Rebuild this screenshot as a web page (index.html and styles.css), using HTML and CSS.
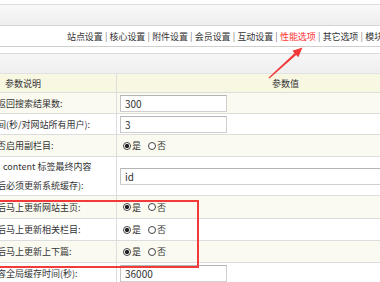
FILE: index.html
```html
<!DOCTYPE html>
<html lang="zh-CN">
<head>
<meta charset="utf-8">
<link rel="stylesheet" href="styles.css">
</head>
<body>
<div class="page">
  <div class="bar1"></div>
  <div class="nav">
    <span class="item">站点设置</span><span class="sep">|</span>
    <span class="item">核心设置</span><span class="sep">|</span>
    <span class="item">附件设置</span><span class="sep">|</span>
    <span class="item">会员设置</span><span class="sep">|</span>
    <span class="item">互动设置</span><span class="sep">|</span>
    <span class="item active">性能选项</span><span class="sep">|</span>
    <span class="item">其它选项</span><span class="sep">|</span>
    <span class="item">模块设置</span>
  </div>
  <div class="gap"></div>
  <div class="bar2"></div>
  <div class="cfg">
    <div class="row head"><div class="lab"><span class="title">参数说明</span></div><div class="val center">参数值</div></div>
    <div class="row alt"><div class="lab"><span class="cut">返回搜索结果数:</span></div><div class="val"><span class="inp">300</span></div></div>
    <div class="row"><div class="lab"><span class="cut">间(秒/对网站所有用户):</span></div><div class="val"><span class="inp">3</span></div></div>
    <div class="row alt r3"><div class="lab"><span class="cut">否启用副栏目:</span></div><div class="val"><span class="radio on"></span><span class="opt">是</span><span class="radio"></span><span class="opt">否</span></div></div>
    <div class="row tall"><div class="lab two"><span class="line first">content 标签最终内容</span><span class="line cut">后必须更新系统缓存):</span></div><div class="val"><span class="inp wide">id</span></div></div>
    <div class="row alt r5"><div class="lab"><span class="cut">后马上更新网站主页:</span></div><div class="val"><span class="radio on"></span><span class="opt">是</span><span class="radio"></span><span class="opt">否</span></div></div>
    <div class="row r6"><div class="lab"><span class="cut">后马上更新相关栏目:</span></div><div class="val"><span class="radio on"></span><span class="opt">是</span><span class="radio"></span><span class="opt">否</span></div></div>
    <div class="row alt r7"><div class="lab"><span class="cut">后马上更新上下篇:</span></div><div class="val"><span class="radio on"></span><span class="opt">是</span><span class="radio"></span><span class="opt">否</span></div></div>
    <div class="row"><div class="lab"><span class="cut">容全局缓存时间(秒):</span></div><div class="val"><span class="inp">36000</span></div></div>
  </div>
  <div class="redbox"></div>
  <svg class="arrow" width="50" height="40" viewBox="0 0 50 40">
    <polygon points="9.4,36.4 36.2,13.1 38.3,15.3 42.5,5.6 32.4,8.8 34.5,11.2 8.6,35.6" fill="#f23a3a"/>
  </svg>
</div>
</body>
</html>
```

FILE: styles.css
```css
html, body {
  margin: 0;
  padding: 0;
  overflow: hidden;
  background: #fff;
}
.page {
  position: relative;
  width: 460px;
  font-family: "Noto Sans CJK SC", "Noto Sans", sans-serif;
  font-size: 9px;
  color: #333;
}
.bar1 {
  margin-top: 4px;
  height: 20px;
  border-top: 1px solid #dcdcdc;
  border-bottom: 1px solid #d6d6d6;
  background: linear-gradient(#f9f9f9, #eeeeee);
}
.nav {
  height: 20px;
  display: flex;
  align-items: center;
  padding-left: 67px;
  white-space: nowrap;
  border-bottom: 1px solid #cfcfcf;
  color: #333;
}
.nav .item {
  letter-spacing: -0.1px;
}
.nav .sep {
  width: 7px;
  text-align: center;
  color: #777;
}
.nav .active {
  color: #f33;
}
.gap {
  height: 6px;
  border-bottom: 1px solid #dcdcdc;
}
.bar2 {
  height: 19px;
  background: linear-gradient(#f6f6f6, #efefef);
}
.cfg {
  border-top: 1px solid #e2e2e2;
}
.row {
  display: grid;
  grid-template-columns: 117px 337px;
  height: 20px;
  border-bottom: 1px solid #dddddd;
  background: #fff;
}
.row.alt {
  background: #fafaf0;
}
.row.head {
  height: 18px;
  background: #f7f7e2;
}
.r3 { height: 21px; }
.tall { height: 38px; }
.r5 { height: 22px; }
.r6 { height: 21px; }
.r7 { height: 21px; }
.lab {
  display: flex;
  align-items: center;
  overflow: hidden;
  white-space: nowrap;
  border-right: 1px solid #dddddd;
}
.lab.two {
  flex-direction: column;
  align-items: flex-start;
  justify-content: center;
}
.line {
  display: block;
  line-height: 19px;
}
.line.first {
  padding-left: 3px;
}
.title {
  padding-left: 5px;
}
.cut {
  margin-left: -3px;
}
.val {
  display: flex;
  align-items: center;
  padding-left: 6px;
  white-space: nowrap;
}
.val.center {
  justify-content: center;
  padding-left: 0;
}
.inp {
  display: block;
  box-sizing: border-box;
  width: 107px;
  height: 17px;
  margin-left: -3px;
  padding-left: 4px;
  border: 1px solid #cfcfcf;
  border-top-color: #b4b4b4;
  border-left-color: #c4c4c4;
  background: #fff;
  font-size: 10px;
  line-height: 15px;
  color: #333;
}
.inp.wide {
  width: 330px;
}
.radio {
  display: inline-block;
  box-sizing: border-box;
  width: 8px;
  height: 8px;
  border: 1px solid #444;
  border-radius: 50%;
  background: #fff;
}
.radio.on {
  background: radial-gradient(circle, #222 0 1.8px, #fff 2.4px);
}
.opt {
  margin-left: 1px;
  margin-right: 7px;
}
.redbox {
  position: absolute;
  left: -4px;
  top: 196px;
  width: 203px;
  height: 68px;
  box-sizing: border-box;
  border: 2px solid #f23a3a;
}
.arrow {
  position: absolute;
  left: 260px;
  top: 38px;
}
```
